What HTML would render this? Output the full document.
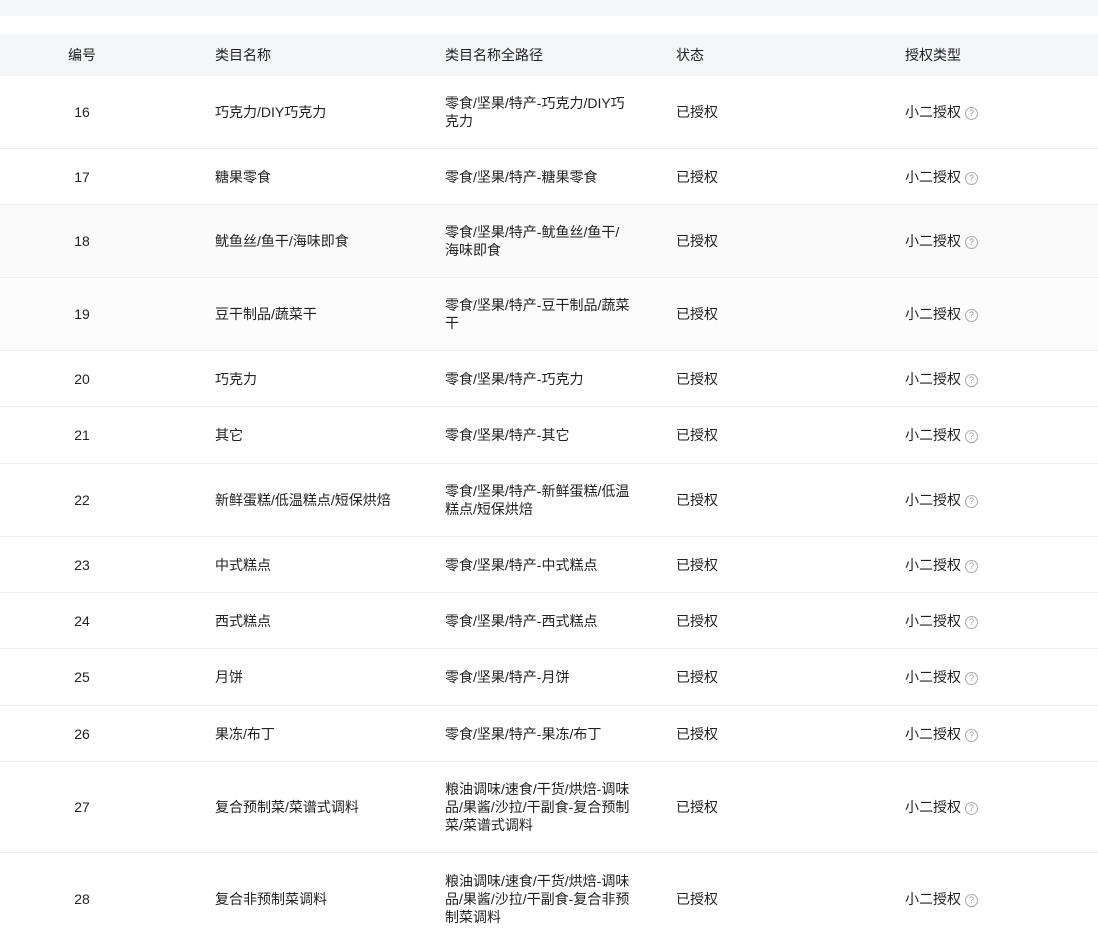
<!DOCTYPE html>
<html><head><meta charset="utf-8"><style>
body{margin:0;width:1098px;height:924px;overflow:hidden;background:#fff;font-family:"Liberation Sans","Noto Sans CJK SC",sans-serif;font-size:14px;color:#222;position:relative}
.top{position:absolute;left:0;top:0;width:1098px;height:16px;background:#f5f6f8}
.hdr{position:absolute;left:0;top:34px;width:1098px;height:42px;background:#f5f6f8}
.row{position:absolute;left:0;width:1098px;border-bottom:1px solid #eeeff1;box-sizing:border-box}
.c{position:absolute;top:50%;transform:translateY(-50%);line-height:18px;white-space:nowrap}
.c1{left:60px;width:44px;text-align:center}
.c2{left:215px}.c3{left:445px}.c4{left:676px}.c5{left:905px}
.q{display:inline-block;width:11px;height:11px;border:1px solid #aaa;border-radius:50%;font-size:9px;line-height:11px;text-align:center;color:#999;margin-left:4px;vertical-align:1px}
</style></head><body>
<div class="top"></div>
<div class="hdr" style="border:none"><div class="c c1">编号</div><div class="c c2">类目名称</div><div class="c c3">类目名称全路径</div><div class="c c4">状态</div><div class="c c5">授权类型</div></div>

<div class="row" style="top:76px;height:73px"><div class="c c1">16</div><div class="c c2">巧克力/DIY巧克力</div><div class="c c3">零食/坚果/特产-巧克力/DIY巧<br>克力</div><div class="c c4">已授权</div><div class="c c5">小二授权<span class="q">?</span></div></div>
<div class="row" style="top:149px;height:56px"><div class="c c1">17</div><div class="c c2">糖果零食</div><div class="c c3">零食/坚果/特产-糖果零食</div><div class="c c4">已授权</div><div class="c c5">小二授权<span class="q">?</span></div></div>
<div class="row" style="top:205px;height:73px;background:#fafafa"><div class="c c1">18</div><div class="c c2">鱿鱼丝/鱼干/海味即食</div><div class="c c3">零食/坚果/特产-鱿鱼丝/鱼干/<br>海味即食</div><div class="c c4">已授权</div><div class="c c5">小二授权<span class="q">?</span></div></div>
<div class="row" style="top:278px;height:73px;background:#fbfcfb"><div class="c c1">19</div><div class="c c2">豆干制品/蔬菜干</div><div class="c c3">零食/坚果/特产-豆干制品/蔬菜<br>干</div><div class="c c4">已授权</div><div class="c c5">小二授权<span class="q">?</span></div></div>
<div class="row" style="top:351px;height:56px"><div class="c c1">20</div><div class="c c2">巧克力</div><div class="c c3">零食/坚果/特产-巧克力</div><div class="c c4">已授权</div><div class="c c5">小二授权<span class="q">?</span></div></div>
<div class="row" style="top:407px;height:57px"><div class="c c1">21</div><div class="c c2">其它</div><div class="c c3">零食/坚果/特产-其它</div><div class="c c4">已授权</div><div class="c c5">小二授权<span class="q">?</span></div></div>
<div class="row" style="top:464px;height:73px"><div class="c c1">22</div><div class="c c2">新鲜蛋糕/低温糕点/短保烘焙</div><div class="c c3">零食/坚果/特产-新鲜蛋糕/低温<br>糕点/短保烘焙</div><div class="c c4">已授权</div><div class="c c5">小二授权<span class="q">?</span></div></div>
<div class="row" style="top:537px;height:56px"><div class="c c1">23</div><div class="c c2">中式糕点</div><div class="c c3">零食/坚果/特产-中式糕点</div><div class="c c4">已授权</div><div class="c c5">小二授权<span class="q">?</span></div></div>
<div class="row" style="top:593px;height:56px"><div class="c c1">24</div><div class="c c2">西式糕点</div><div class="c c3">零食/坚果/特产-西式糕点</div><div class="c c4">已授权</div><div class="c c5">小二授权<span class="q">?</span></div></div>
<div class="row" style="top:649px;height:57px"><div class="c c1">25</div><div class="c c2">月饼</div><div class="c c3">零食/坚果/特产-月饼</div><div class="c c4">已授权</div><div class="c c5">小二授权<span class="q">?</span></div></div>
<div class="row" style="top:706px;height:56px"><div class="c c1">26</div><div class="c c2">果冻/布丁</div><div class="c c3">零食/坚果/特产-果冻/布丁</div><div class="c c4">已授权</div><div class="c c5">小二授权<span class="q">?</span></div></div>
<div class="row" style="top:762px;height:91px"><div class="c c1">27</div><div class="c c2">复合预制菜/菜谱式调料</div><div class="c c3">粮油调味/速食/干货/烘焙-调味<br>品/果酱/沙拉/干副食-复合预制<br>菜/菜谱式调料</div><div class="c c4">已授权</div><div class="c c5">小二授权<span class="q">?</span></div></div>
<div class="row" style="top:853px;height:91px;border:none"><div class="c c1">28</div><div class="c c2">复合非预制菜调料</div><div class="c c3">粮油调味/速食/干货/烘焙-调味<br>品/果酱/沙拉/干副食-复合非预<br>制菜调料</div><div class="c c4">已授权</div><div class="c c5">小二授权<span class="q">?</span></div></div>
</body></html>
